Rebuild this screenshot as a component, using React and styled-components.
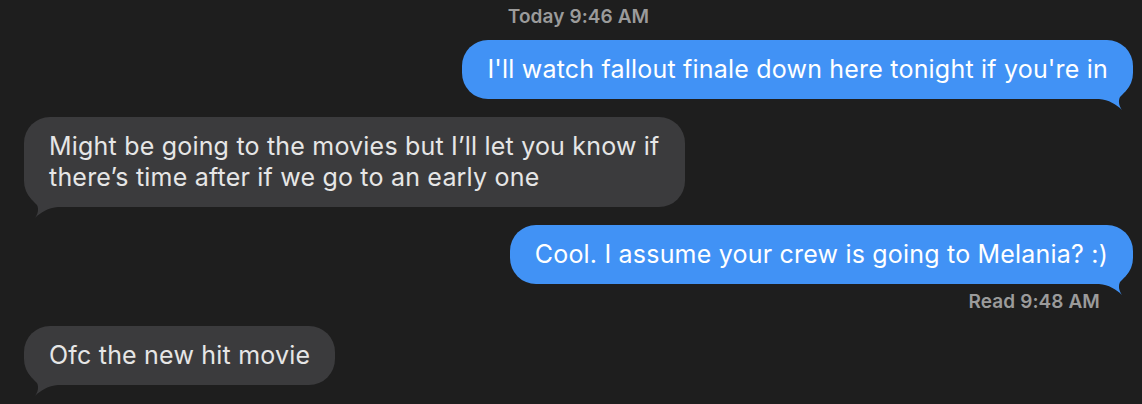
import React from "react";
import styled, { createGlobalStyle } from "styled-components";

const Global = createGlobalStyle`
  html, body { margin: 0; padding: 0; background: #1e1e1e; }
  body { font-family: Inter, "Noto Sans", "Liberation Sans", sans-serif; -webkit-font-smoothing: antialiased; }
`;

const Thread = styled.div`
  width: 1142px;
  height: 404px;
  box-sizing: border-box;
  padding: 5px 9px 0 24px;
  display: flex;
  flex-direction: column;
  overflow: hidden;
`;

const Stamp = styled.div`
  display: flex;
  justify-content: center;
  color: #9b9b9b;
  font-size: 19px;
  font-weight: 600;
  line-height: 24px;
  letter-spacing: 0.1px;
`;

const Row = styled.div`
  display: flex;
  justify-content: ${(p) => (p.$out ? "flex-end" : "flex-start")};
  margin-top: ${(p) => p.$gap}px;
`;

const Bubble = styled.div`
  position: relative;
  box-sizing: border-box;
  padding: 14px 25px 14px 25px;
  border-radius: 26px;
  background: ${(p) => (p.$out ? "#4192f5" : "#3b3b3d")};
  color: ${(p) => (p.$out ? "#ffffff" : "#e6e6e6")};
  font-size: 25px;
  line-height: 31px;
  letter-spacing: 0.2px;
  white-space: nowrap;
`;

const Text = styled.span`
  position: relative;
`;

const TailSvg = styled.svg`
  position: absolute;
  bottom: -11px;
  ${(p) => (p.$out ? "right: 0;" : "left: 0; transform: scaleX(-1);")}
  width: 34px;
  height: 50px;
  overflow: visible;
`;

const Receipt = styled.div`
  display: flex;
  justify-content: flex-end;
  padding-right: 33px;
  margin-top: 6px;
  color: #9b9b9b;
  font-size: 19px;
  font-weight: 600;
  line-height: 24px;
  letter-spacing: 0.1px;
`;

function Tail({ out }) {
  return (
    <TailSvg $out={out} viewBox="0 0 34 50">
      <path
        d="M0 39 C10 40 17 44 23 50 C20 46 19 41 21 37 C28 30 33 24 33 12 L33 0 L0 0 Z"
        fill={out ? "#4192f5" : "#3b3b3d"}
      />
    </TailSvg>
  );
}

function Message({ out, gap, children }) {
  return (
    <Row $out={out} $gap={gap}>
      <Bubble $out={out}>
        <Tail out={out} />
        <Text>{children}</Text>
      </Bubble>
    </Row>
  );
}

export default function App() {
  return (
    <>
      <Global />
      <Thread>
        <Stamp>Today 9:46 AM</Stamp>
        <Message out gap={11}>
          I'll watch fallout finale down here tonight if you're in
        </Message>
        <Message gap={18}>
          Might be going to the movies but I’ll let you know if
          <br />
          there’s time after if we go to an early one
        </Message>
        <Message out gap={18}>
          Cool. I assume your crew is going to Melania? :)
        </Message>
        <Receipt>Read 9:48 AM</Receipt>
        <Message gap={12}>Ofc the new hit movie</Message>
      </Thread>
    </>
  );
}
